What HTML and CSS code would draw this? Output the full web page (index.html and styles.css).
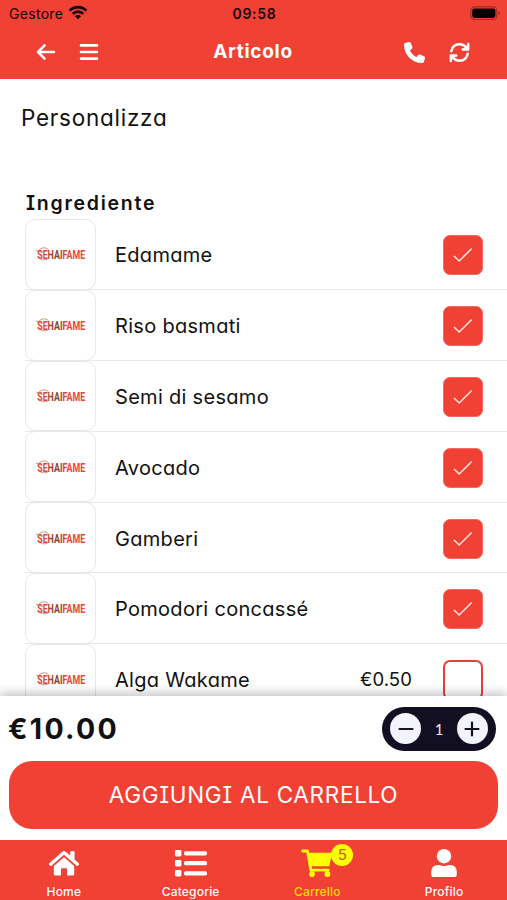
FILE: index.html
```html
<!DOCTYPE html>
<html lang="it">
<head>
<meta charset="utf-8">
<meta name="viewport" content="width=device-width, initial-scale=1">
<title>Articolo</title>
<link rel="stylesheet" href="styles.css">
</head>
<body>
<div class="app">
  <header class="header">
    <div class="status">
      <div class="carrier"><span>Gestore</span>
        <svg width="20" height="15" viewBox="0 0 20 15" fill="none" stroke="#180605" stroke-width="2.6"><path d="M1.6 5.6a12 12 0 0 1 16.8 0M4.8 8.8a7.4 7.4 0 0 1 10.4 0"/><path d="M10 14.2 7 11.2a4.3 4.3 0 0 1 6 0z" fill="#180605" stroke="none"/></svg>
      </div>
      <span class="clock">09:58</span>
      <svg class="battery" width="31" height="15" viewBox="0 0 31 15"><rect x=".8" y=".9" width="26" height="12.6" rx="3.8" fill="none" stroke="#a52c22" stroke-width="1.2"/><rect x="2.2" y="2.4" width="23.2" height="9.6" rx="2.4" fill="#080000"/><path d="M28.5 5.2v4q1.6-.7 1.6-2t-1.6-2" fill="#a52c22"/></svg>
    </div>
    <div class="nav">
      <div class="nav-left">
        <svg width="20" height="18" viewBox="0 0 20 18" fill="none" stroke="#fff" stroke-width="2.5" stroke-linecap="round" stroke-linejoin="round"><path d="M8.6 2.3 2 9l6.6 6.7M2.3 9H18"/></svg>
        <svg width="20" height="18" viewBox="0 0 20 18" stroke="#fff" stroke-width="2.6" stroke-linecap="round"><path d="M2 2.4h16M2 9h16M2 15.6h16"/></svg>
      </div>
      <h1>Articolo</h1>
      <div class="nav-right">
        <svg width="21" height="21" viewBox="0 0 512 512" fill="#fff"><path d="M164.9 24.6c-7.7-18.6-28-28.5-47.4-23.2l-88 24C12.1 30.2 0 46 0 64C0 311.4 200.6 512 448 512c18 0 33.8-12.1 38.6-29.5l24-88c5.3-19.4-4.6-39.7-23.2-47.4l-96-40c-16.3-6.8-35.2-2.1-46.3 11.6L304.7 368C234.3 334.7 177.3 277.7 144 207.3L193.3 167c13.7-11.2 18.4-30 11.6-46.3l-40-96z"/></svg>
        <svg width="21" height="21" viewBox="0 0 21 21" fill="none" stroke="#fff" stroke-width="2.5" stroke-linecap="round" stroke-linejoin="round"><path d="M2.3 9.2C3.2 4.8 6.5 2.3 10.5 2.3c3 0 5.3 1.4 6.9 3.7M19.2 2v5.5h-5.5M18.7 11.8c-.9 4.4-4.2 6.9-8.2 6.9-3 0-5.3-1.4-6.9-3.7M1.8 19v-5.5h5.5"/><path d="M19 3v4.3h-4.3zM2 18v-4.3h4.3z" fill="#fff" stroke-width="1"/></svg>
      </div>
    </div>
  </header>

  <main class="content">
    <h2>Personalizza</h2>
    <h3>Ingrediente</h3>
    <ul class="list">
      <li class="row"><div class="thumb"><svg class="logo"><use href="#brand"/></svg></div><span class="name">Edamame</span><span class="box on"><svg><use href="#tick"/></svg></span></li>
      <li class="row"><div class="thumb"><svg class="logo"><use href="#brand"/></svg></div><span class="name">Riso basmati</span><span class="box on"><svg><use href="#tick"/></svg></span></li>
      <li class="row"><div class="thumb"><svg class="logo"><use href="#brand"/></svg></div><span class="name">Semi di sesamo</span><span class="box on"><svg><use href="#tick"/></svg></span></li>
      <li class="row"><div class="thumb"><svg class="logo"><use href="#brand"/></svg></div><span class="name">Avocado</span><span class="box on"><svg><use href="#tick"/></svg></span></li>
      <li class="row"><div class="thumb"><svg class="logo"><use href="#brand"/></svg></div><span class="name">Gamberi</span><span class="box on"><svg><use href="#tick"/></svg></span></li>
      <li class="row"><div class="thumb"><svg class="logo"><use href="#brand"/></svg></div><span class="name">Pomodori concassé</span><span class="box on"><svg><use href="#tick"/></svg></span></li>
      <li class="row"><div class="thumb"><svg class="logo"><use href="#brand"/></svg></div><span class="name">Alga Wakame</span><span class="extra">€0.50</span><span class="box"></span></li>
    </ul>
  </main>

  <section class="buy">
    <div class="summary">
      <strong class="total">€10.00</strong>
      <div class="stepper">
        <span class="round"><svg width="18" height="18" viewBox="0 0 18 18"><path d="M2.5 9h13"/></svg></span>
        <span class="qty">1</span>
        <span class="round"><svg width="18" height="18" viewBox="0 0 18 18"><path d="M2.5 9h13M9 2.5v13"/></svg></span>
      </div>
    </div>
    <div class="cta"><span>AGGIUNGI AL CARRELLO</span></div>
  </section>

  <nav class="tabs">
    <div class="tab"><svg width="32" height="28" viewBox="0 0 32 28" fill="#fff"><path d="M16 8.2 26.2 17v8.2q0 1.3-1.3 1.3h-5.8v-6.3q0-1-1-1h-4.2q-1 0-1 1v6.3H7.1q-1.3 0-1.3-1.3V17z"/><path d="M22.2 6.6V3.2q0-.9.9-.9h2.6q.9 0 .9.9v7.4l4.2 3.7q.8.7.1 1.4l-.8.9q-.7.8-1.5.1L16 5.8 3.4 16.7q-.8.7-1.5-.1l-.8-.9q-.7-.7.1-1.4L14.4 2.7q1.6-1.3 3.2 0z"/></svg><span>Home</span></div>
    <div class="tab"><svg width="32" height="28" viewBox="0 0 32 28" fill="#fff"><rect y="1" width="6.4" height="6.4" rx="1.3"/><rect y="11" width="6.4" height="6.4" rx="1.3"/><rect y="21" width="6.4" height="6.4" rx="1.3"/><rect x="9" y="2.2" width="23" height="4.2" rx="1.6"/><rect x="9" y="12.1" width="23" height="4.2" rx="1.6"/><rect x="9" y="22.2" width="23" height="4.2" rx="1.6"/></svg><span>Categorie</span></div>
    <div class="tab active"><div class="cart"><svg width="32" height="28" viewBox="0 0 32 28"><path d="M1.6 2h4.9l3.3 19.1h17.4" fill="none" stroke="#ff0" stroke-width="2.8" stroke-linecap="round" stroke-linejoin="round"/><path d="M7.5 3.8h23.6l-2.8 13.4H9.7z" fill="#ff0"/><circle cx="11" cy="25" r="2.9" fill="#ff0"/><circle cx="26.4" cy="25" r="2.9" fill="#ff0"/></svg><b class="badge">5</b></div><span>Carrello</span></div>
    <div class="tab"><svg width="32" height="28" viewBox="0 0 32 28" fill="#fff"><circle cx="16" cy="7.2" r="7.2"/><path d="M3.2 25.3v-2.1q0-7.1 7-7.1h1.1q4.7 2 9.4 0h1.1q7 0 7 7.1v2.1q0 3.5-3.2 3.5H6.4q-3.2 0-3.2-3.5"/></svg><span>Profilo</span></div>
  </nav>
</div>
<svg class="defs" aria-hidden="true">
  <defs>
    <linearGradient id="ink"><stop offset="0" stop-color="#ec4636"/><stop offset=".2" stop-color="#d4493a"/><stop offset=".32" stop-color="#8d4433"/><stop offset=".48" stop-color="#8a3b2b"/><stop offset=".57" stop-color="#e04a34"/><stop offset="1" stop-color="#f04535"/></linearGradient>
    <symbol id="brand" viewBox="0 0 50 16"><path d="M0 4Q3 4 2.5 7M2.5 4.5q5-5 10-1M2.5 11q3 4 9 2.4" fill="none" stroke="#b9806c" stroke-width=".8"/><text class="brand-text" x="1.2" y="12.9" textLength="48" lengthAdjust="spacingAndGlyphs" fill="url(#ink)">SEHAIFAME</text></symbol>
    <symbol id="tick" viewBox="0 0 20 16"><path d="m1 9 5.2 5L18.7 1.5" fill="none" stroke="#ffe3df" stroke-width="1.6"/></symbol>
  </defs>
</svg>
</body>
</html>
```
FILE: styles.css
```css
* { box-sizing: border-box; }
body { margin: 0; background: #fff; color: #111; font-family: Inter, Lato, sans-serif; font-feature-settings: "cv11" 1; }
h1, h2, h3, ul { margin: 0; padding: 0; }
svg { display: block; flex: none; }
.app { width: 507px; height: 900px; display: flex; flex-direction: column; overflow: hidden; }
.header { height: 79px; flex: none; background: #f04134; }
.status { height: 27px; padding: 0 7px 0 9px; display: grid; grid-template-columns: 1fr auto 1fr; align-items: center; color: #180605; }
.carrier { display: flex; align-items: center; gap: 5px; font-size: 14px; letter-spacing: .3px; }
.carrier svg { margin-top: -3px; }
.clock { font-size: 14px; font-weight: 600; letter-spacing: .75px; }
.battery { justify-self: end; margin-right: -1px; }
.nav { height: 50px; padding: 0 37px 0 36px; display: grid; grid-template-columns: 1fr auto 1fr; align-items: center; }
.nav-left { display: flex; gap: 23px; }
.nav-right { display: flex; gap: 24px; justify-content: flex-end; }
.nav h1 { color: #fff; font-size: 19px; line-height: 24px; font-weight: 700; letter-spacing: .7px; }
.content { height: 617px; flex: none; overflow: hidden; }
.content h2 { padding: 24px 0 0 21px; font-size: 22.5px; line-height: 30px; font-weight: 400; letter-spacing: .75px; }
.content h3 { padding: 57px 0 0 26px; font-size: 19.5px; line-height: 26px; font-weight: 600; letter-spacing: 1.75px; font-feature-settings: "cv11" 1, "cv08" 1; }
.list { list-style: none; padding: 3.5px 0 0 25px; }
.row { height: 70.8px; display: flex; align-items: center; padding-right: 24px; border-bottom: 1px solid #e8e8ea; }
.thumb { width: 71px; height: 70.8px; margin-right: 19px; flex: none; display: flex; align-items: center; justify-content: center; border: 1.5px solid #e5e7ea; border-radius: 10px; background: #fff; }
.logo { width: 50px; height: 16px; }
.brand-text { font-family: Roboto, sans-serif; font-size: 13px; font-weight: 700; }
.name { flex: 1; padding-top: 2px; font-size: 20px; line-height: 26px; white-space: nowrap; letter-spacing: .3px; }
.extra { margin-right: 31px; font-size: 18.5px; letter-spacing: .1px; }
.box { position: relative; top: 1px; width: 40px; height: 40px; flex: none; display: flex; align-items: center; justify-content: center; border: 2px solid #e84237; border-radius: 7px; }
.box.on { background: #f04134; border: 1px solid #f36b60; }
.box svg { width: 20px; height: 16px; }
.buy { height: 144px; flex: none; position: relative; background: #fff; padding: 10px 9px 0; box-shadow: 0 -3px 10px rgba(0,0,0,.24); }
.summary { height: 45px; display: flex; align-items: center; justify-content: space-between; padding-right: 2px; }
.total { margin-left: -1px; font-size: 28.5px; font-weight: 700; letter-spacing: 2.3px; }
.stepper { width: 114px; height: 44px; padding: 0 8px; display: flex; align-items: center; justify-content: space-between; border-radius: 22px; background: #120f22; color: #ececf7; }
.round { width: 31px; height: 31px; display: flex; align-items: center; justify-content: center; border-radius: 50%; background: #f3f3fc; }
.round path { stroke: #15131f; stroke-width: 2.2; stroke-linecap: round; }
.qty { font-size: 15px; font-family: Lato, sans-serif; }
.cta { height: 68px; margin-top: 10px; padding-bottom: 1px; display: flex; align-items: center; justify-content: center; border-radius: 23px; background: #f04134; color: #fff; font-size: 22.5px; letter-spacing: .7px; font-feature-settings: "cv08" 1; }
.tabs { height: 60px; flex: none; position: relative; display: grid; grid-template-columns: repeat(4, 1fr); background: #f04134; }
.tab { display: flex; flex-direction: column; align-items: center; padding-top: 9px; color: #fff; font-size: 12px; font-weight: 500; line-height: 15px; font-feature-settings: normal; }
.tab > span { margin: 7px 0 0 1px; letter-spacing: .2px; }
.tab > svg, .cart { margin-left: 1px; }
.tab.active { color: #ffde00; }
.cart { position: relative; }
.badge { position: absolute; left: 30px; top: -5px; width: 22px; height: 22px; border-radius: 50%; background: #ff0; color: #b86917; font-size: 15px; font-weight: 400; line-height: 22px; text-align: center; }
.defs { position: absolute; width: 0; height: 0; }
```
